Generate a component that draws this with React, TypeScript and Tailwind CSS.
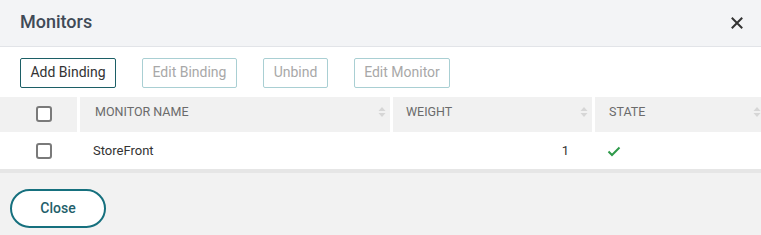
import React from "react";

function SortIcon() {
  return (
    <svg width="8" height="12" viewBox="0 0 8 12" className="shrink-0">
      <path d="M4 1 L7.5 5 L0.5 5 Z" fill="#d6d6d6" />
      <path d="M4 11 L7.5 7 L0.5 7 Z" fill="#d6d6d6" />
    </svg>
  );
}

function Checkbox() {
  return <div className="w-[16px] h-[16px] rounded-[3px] border-2 border-[#7a7a7a] bg-white" />;
}

export default function App() {
  return (
    <div className="w-[761px] h-[235px] bg-[#f2f2f2] flex flex-col overflow-hidden" style={{ fontFamily: "Roboto, 'Noto Sans', sans-serif" }}>
      <div className="h-[47px] shrink-0 bg-[#f3f4f6] flex items-center justify-between pl-[20px] pr-[18px] border-b border-[#e2e4e8]">
        <div className="text-[18px] font-medium text-[#404a57] pb-[3px]">Monitors</div>
        <svg width="12" height="12" viewBox="0 0 12 12">
          <path d="M1.5 1.5 L10.5 10.5 M10.5 1.5 L1.5 10.5" stroke="#333" strokeWidth="2" strokeLinecap="square" />
        </svg>
      </div>
      <div className="bg-white h-[50px] shrink-0 flex items-center gap-[26px] pl-[20px] pt-[1px]">
        <button className="h-[30px] w-[96px] border border-[#1c5f66] rounded-[2px] text-[14px] text-[#333]">Add Binding</button>
        <button className="h-[30px] w-[95px] border border-[#a9cfd3] rounded-[2px] text-[14px] text-[#a8a8a8]">Edit Binding</button>
        <button className="h-[30px] w-[65px] border border-[#a9cfd3] rounded-[2px] text-[14px] text-[#a8a8a8]">Unbind</button>
        <button className="h-[30px] w-[96px] border border-[#a9cfd3] rounded-[2px] text-[14px] text-[#a8a8a8]">Edit Monitor</button>
      </div>
      <div className="h-[35px] shrink-0 bg-white flex gap-[3px] text-[12.5px] text-[#6b6b6b]">
        <div className="w-[77px] bg-[#f1f1f1] flex items-center justify-center pl-[10px] pb-[2px]">
          <Checkbox />
        </div>
        <div className="w-[310px] bg-[#f1f1f1] flex items-center justify-between pl-[15px] pr-[4px] pb-[5px]">
          <span>MONITOR NAME</span>
          <SortIcon />
        </div>
        <div className="w-[199px] bg-[#f1f1f1] flex items-center justify-between pl-[13px] pr-[4px] pb-[5px]">
          <span>WEIGHT</span>
          <SortIcon />
        </div>
        <div className="flex-1 bg-[#f1f1f1] flex items-center justify-between pl-[14px] pr-0 pb-[5px]">
          <span>STATE</span>
          <SortIcon />
        </div>
      </div>
      <div className="h-[41px] shrink-0 bg-white flex text-[13px] text-[#333] border-b-[4px] border-[#e6e6e6]">
        <div className="w-[80px] flex items-center justify-center pl-[7px]">
          <Checkbox />
        </div>
        <div className="w-[313px] flex items-center pl-[13px] pt-[1px]">StoreFront</div>
        <div className="w-[202px] flex items-center justify-end pr-[26px] pt-[1px]">1</div>
        <div className="flex-1 flex items-center pl-[12px] pt-[1px]">
          <svg width="14" height="11" viewBox="0 0 14 11">
            <path d="M1.5 5.5 L5 9 L12.5 1.5" stroke="#2f9a4a" strokeWidth="2" fill="none" />
          </svg>
        </div>
      </div>
      <div className="flex-1 flex items-start pl-[10px] pt-[16px]">
        <button className="w-[96px] h-[39px] rounded-full border-2 border-[#16707e] bg-white text-[14px] text-[#1f5f6b] font-medium">Close</button>
      </div>
    </div>
  );
}
